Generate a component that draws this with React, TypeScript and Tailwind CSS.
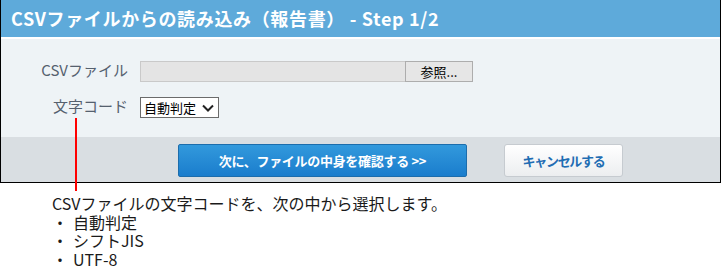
const jp = { fontFamily: '"Noto Sans CJK JP", "Liberation Sans", sans-serif' };

const FormRow = ({ label, children }: { label: string; children: React.ReactNode }) => {
  return (
    <div className="flex items-center">
      <div className="w-[127px] pb-[4px] text-right text-[15px] text-[#55606e] leading-none">{label}</div>
      <div className="ml-[12px] flex">{children}</div>
    </div>
  );
};

const App = () => {
  return (
    <div className="relative w-[722px] h-[275px] bg-white" style={jp}>
      <div className="w-[721px] border-x border-b border-black">
        <div className="h-[37px] bg-[#5eaada] pl-[10px] flex items-center text-white font-bold text-[18px] tracking-[0.65px]">
          CSVファイルからの読み込み（報告書） - Step 1/2
        </div>
        <div className="h-[2px] bg-white" />
        <div className="h-[98px] bg-[#eef3f6] pt-[22px] flex flex-col gap-[15px]">
          <FormRow label="CSVファイル">
            <div className="w-[266px] h-[21px] bg-[#e4e4e4] border border-[#c9c9c9]" />
            <div className="w-[68px] h-[21px] bg-[#e6e6e6] border border-[#adadad] -ml-px flex items-center justify-center text-[13px] text-black">
              参照...
            </div>
          </FormRow>
          <FormRow label="文字コード">
            <div className="w-[79px] h-[21px] bg-white border border-[#6b6b6b] flex items-center pl-[3px] pr-[4px] justify-between text-[13px] text-black">
              <span>自動判定</span>
              <svg width="12" height="8" viewBox="0 0 12 8">
                <path d="M1 1.5 L6 6.5 L11 1.5" fill="none" stroke="#222" strokeWidth="2" />
              </svg>
            </div>
          </FormRow>
        </div>
        <div className="h-[45px] bg-[#d9dee2] flex items-start pt-[7px] pl-[177px] gap-[37px]">
          <button className="w-[289px] h-[33px] rounded-[2px] border border-[#1c6dac] bg-gradient-to-b from-[#3299dc] to-[#1a7dcd] text-white font-bold text-[13px] tracking-[-0.3px]">
            次に、ファイルの中身を確認する &gt;&gt;
          </button>
          <button className="w-[119px] h-[33px] rounded-[3px] border border-[#c6cbd0] bg-gradient-to-b from-white to-[#eceef0] text-[#1f6db3] font-bold text-[13px] tracking-[-1.3px]">
            キャンセルする
          </button>
        </div>
      </div>
      <div className="absolute left-[75px] top-[118px] w-[2px] h-[73px] bg-[#ff0000]" />
      <div className="pl-[52px] pt-[11px] text-[16px] leading-[18.5px] text-[#1a1a1a]">
        <div>CSVファイルの文字コードを、次の中から選択します。</div>
        <div className="flex"><span className="w-[21px]">・</span>自動判定</div>
        <div className="flex"><span className="w-[21px]">・</span>シフトJIS</div>
        <div className="flex"><span className="w-[21px]">・</span>UTF-8</div>
      </div>
    </div>
  );
};

export default App;
